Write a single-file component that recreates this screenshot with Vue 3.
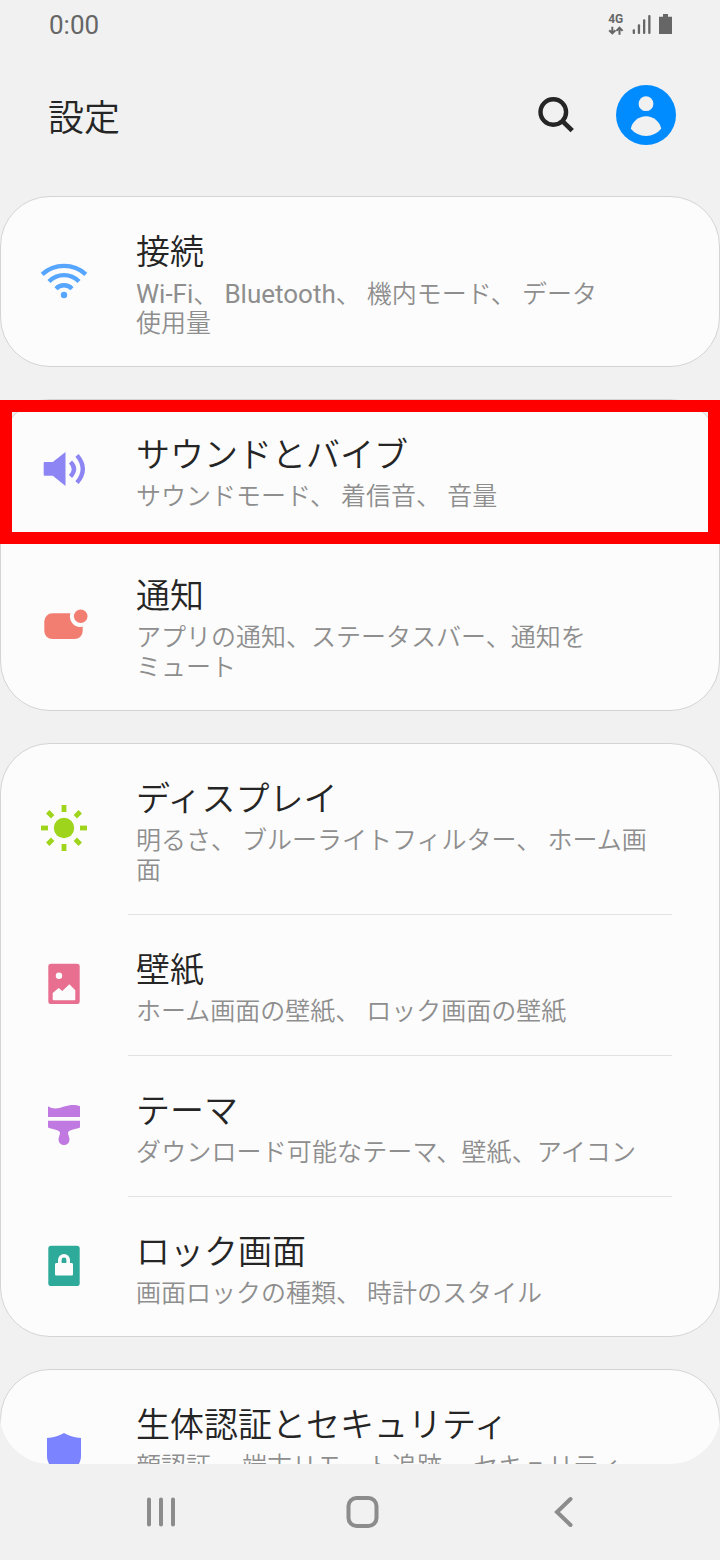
<script setup>
const groups = [
  [
    { icon: 'wifi', title: '接続', lines: ['Wi-Fi、 Bluetooth、 機内モード、 データ', '使用量'], tall: true },
  ],
  [
    { icon: 'sound', title: 'サウンドとバイブ', lines: ['サウンドモード、 着信音、 音量'], highlighted: true },
    { icon: 'notice', title: '通知', lines: ['アプリの通知、ステータスバー、通知を', 'ミュート'], tall: true },
  ],
  [
    { icon: 'display', title: 'ディスプレイ', lines: ['明るさ、 ブルーライトフィルター、 ホーム画', '面'], tall: true },
    { icon: 'wallpaper', title: '壁紙', lines: ['ホーム画面の壁紙、 ロック画面の壁紙'] },
    { icon: 'theme', title: 'テーマ', lines: ['ダウンロード可能なテーマ、壁紙、アイコン'] },
    { icon: 'lock', title: 'ロック画面', lines: ['画面ロックの種類、 時計のスタイル'] },
  ],
  [
    { icon: 'shield', title: '生体認証とセキュリティ', lines: ['顔認証、 端末リモート追跡、 セキュリティ'], tall: true },
  ],
]
const rays = [0, 45, 90, 135, 180, 225, 270, 315]

// Splits a line into Latin and Japanese runs so each can be set in its own size.
const runs = (line) =>
  line
    .split(/([A-Za-z-]+)/)
    .filter(Boolean)
    .map((text) => ({ text, latin: /^[A-Za-z-]+$/.test(text) }))
</script>

<template>
  <div class="phone">
    <main class="viewport">
      <div class="status">
        <span class="time">0:00</span>
        <svg class="status-icons" width="66" height="24" viewBox="0 0 66 24">
          <text x="0.2" y="11.4" class="net">4G</text>
          <g fill="none" stroke="#666" stroke-width="2">
            <path d="M4.3 14.7V21M1.2 18.2l3.1 3.2 3.1-3.2" />
            <path d="M11.5 22.8v-6.6M8.4 18.9l3.1-3.2 3.1 3.2" />
          </g>
          <g fill="#666">
            <rect x="24.7" y="17.3" width="2.3" height="4.7" rx="1" />
            <rect x="29.8" y="12.3" width="2.3" height="9.7" rx="1" />
            <rect x="35" y="7.3" width="2.3" height="14.7" rx="1" />
            <rect x="40.2" y="3" width="2.3" height="19" rx="1" />
            <path d="M55 2h5v2.7h4V22H51V4.7h4z" />
          </g>
        </svg>
      </div>

      <header class="header">
        <h1>設定</h1>
        <div class="actions">
          <svg width="40" height="40" viewBox="0 0 40 40" fill="none" stroke="#252525" stroke-width="4.4">
            <circle cx="17.3" cy="17" r="12.8" />
            <path d="M26.2 25.9l10 9.7" stroke-width="4.8" />
          </svg>
          <svg width="60" height="60" viewBox="0 0 60 60">
            <circle cx="30" cy="30" r="30" fill="#008cff" />
            <g fill="#f1f1f1">
              <circle cx="30" cy="18.7" r="7.4" />
              <path d="M14.8 43.7A15.5 15.5 0 0 1 45.2 43.7A19.5 19.5 0 0 1 14.8 43.7z" />
            </g>
          </svg>
        </div>
      </header>

      <section v-for="(group, gi) in groups" :key="gi" class="group">
        <div
          v-for="row in group"
          :key="row.title"
          class="row"
          :class="[row.icon, { tall: row.tall, highlighted: row.highlighted }]"
        >
          <svg class="icon" width="48" height="48" viewBox="0 0 48 48">
            <g v-if="row.icon === 'wifi'" fill="none" stroke="#56a5ff" stroke-width="4.3">
              <path d="M2.2 17.3A32.7 32.7 0 0 1 45.8 17.3" />
              <path d="M9 24.5A21 21 0 0 1 39 24.5" />
              <path d="M16 31.7A11 11 0 0 1 32 31.7" />
              <circle cx="24" cy="38" r="3.2" fill="#56a5ff" stroke="none" />
            </g>
            <g v-else-if="row.icon === 'sound'">
              <path d="M4.7 17H12.8L25.5 7V41L12.8 30.7H4.7a1 1 0 0 1-1-1V18a1 1 0 0 1 1-1z" fill="#8c85f3" />
              <path d="M30.5 17Q37.5 24 30.500 31.5M37 10.3Q48.600 24 37 37.7" fill="none" stroke="#8c85f3" stroke-width="4.3" />
            </g>
            <g v-else-if="row.icon === 'notice'">
              <rect x="4.3" y="12.3" width="38.4" height="25.7" rx="8" fill="#f27e72" />
              <circle cx="40.7" cy="15.3" r="10.8" fill="#fcfcfc" />
              <circle cx="40.7" cy="15.3" r="6.8" fill="#f27e72" />
            </g>
            <g v-else-if="row.icon === 'display'" fill="#9ed51c">
              <circle cx="24" cy="24" r="10.2" />
              <rect v-for="r in rays" :key="r" x="21.6" y="1" width="4.8" height="7" :transform="`rotate(${r} 24 24)`" />
            </g>
            <g v-else-if="row.icon === 'wallpaper'">
              <rect x="8.3" y="3.7" width="31.4" height="40.4" rx="2.8" fill="#e96f91" />
              <circle cx="19" cy="15.7" r="3.2" fill="#fcfcfc" />
              <path d="M12.7 33L18.7 28L22.3 31L29.3 24.3L35.3 30.3V39.3a1 1 0 0 1-1 1H13.7a1 1 0 0 1-1-1z" fill="#fcfcfc" />
            </g>
            <g v-else-if="row.icon === 'theme'" fill="#c079e0">
              <path d="M8 5.3C13 8.5 18 8 24 5.6C30 3.5 36 3.3 40 5.3V16H8z" />
              <path d="M8 19.7H40V26.5C35 28.3 28.5 29 28 31.5C28 34 29.5 36 29.5 38.5A5.5 5.5 0 0 1 18.5 38.5C18.5 36 20 34 20 31.5C19.5 29 13 28.3 8 26.5z" />
            </g>
            <g v-else-if="row.icon === 'lock'">
              <rect x="8.3" y="3.7" width="31.4" height="40.4" rx="2.8" fill="#2eaa9b" />
              <rect x="15" y="21" width="18" height="12.6" rx="1.4" fill="#fcfcfc" />
              <path d="M19.8 22V18a4.2 4.2 0 0 1 8.4 0V22" fill="none" stroke="#fcfcfc" stroke-width="3.6" />
            </g>
            <path v-else d="M24 3C29 6 35 7.7 41 8V26C41 36 32 42 24 45C16 42 7 36 7 26V8C13 7.7 19 6 24 3z" fill="#7b83ff" />
          </svg>
          <div class="text">
            <h2>{{ row.title }}</h2>
            <p v-for="line in row.lines" :key="line"><span v-for="(run, i) in runs(line)" :key="i" :class="{ latin: run.latin }">{{ run.text }}</span></p>
          </div>
        </div>
      </section>
    </main>

    <nav class="navbar">
      <svg width="48" height="48" viewBox="0 0 48 48" fill="none" stroke="#8c8c8c" stroke-width="4" stroke-linecap="round">
        <path d="M12 11.500V36.500M24 11.500V36.500M36 11.500V36.500" />
      </svg>
      <svg width="48" height="48" viewBox="0 0 48 48" fill="none" stroke="#8c8c8c" stroke-width="4">
        <rect x="9.5" y="10" width="28" height="28" rx="8" />
      </svg>
      <svg width="48" height="48" viewBox="0 0 48 48" fill="none" stroke="#8c8c8c" stroke-width="4" stroke-linecap="round">
        <path d="M30.500 11L17 24L30.500 37" />
      </svg>
    </nav>
  </div>
</template>

<style>
body {
  background: #f1f1f1;
}
</style>

<style scoped>
.phone {
  width: 720px;
  height: 1560px;
  overflow: hidden;
  background: #f1f1f1;
  font-family: Roboto, "Noto Sans CJK JP", sans-serif;
  color: #252525;
}
.viewport {
  height: 1464px;
  overflow: hidden;
  border-radius: 0 0 50px 50px;
}
.status {
  display: flex;
  justify-content: space-between;
  height: 48px;
  padding: 0 46px 0 49px;
}
.time {
  font-size: 26px;
  line-height: 50px;
  color: #666;
}
.status-icons {
  margin-top: 12px;
}
.net {
  font: 700 12px Roboto, sans-serif;
  fill: #666;
}
.header {
  display: flex;
  align-items: center;
  justify-content: space-between;
  height: 134px;
  margin-bottom: 14px;
  padding: 0 44px 0 48px;
}
.header h1 {
  margin: 8px 0 0;
  font-size: 36px;
  font-weight: 350;
  line-height: 54px;
}
.actions {
  display: flex;
  align-items: center;
  gap: 40px;
}
.group {
  box-sizing: border-box;
  margin-bottom: 32px;
  border: 1px solid #d4d4d4;
  border-radius: 50px;
  background: #fcfcfc;
}
.row {
  position: relative;
  display: flex;
  gap: 48px;
  height: 141px;
  padding-left: 39px;
}
.row.tall {
  height: 171px;
}
.row:last-child {
  height: 139px;
}
.row.tall:last-child {
  height: 169px;
}
.row:not(:last-child)::after {
  content: "";
  position: absolute;
  left: 127px;
  right: 47px;
  bottom: 0;
  height: 1px;
  background: #e2e2e2;
}
.icon {
  flex: none;
  margin-top: 45px;
}
.tall .icon {
  margin-top: 60px;
}
.highlighted::before {
  content: "";
  position: absolute;
  z-index: 2;
  top: 0;
  left: -1px;
  width: 720px;
  height: 144px;
  box-sizing: border-box;
  border: 12px solid #f00;
}
.text {
  padding-top: 30px;
  white-space: nowrap;
}
.text h2 {
  margin: 0 0 2px;
  font-size: 34px;
  font-weight: 350;
  line-height: 50px;
}
.text p {
  height: 30px;
  margin: 0;
  font-size: 25px;
  font-weight: 350;
  line-height: 30px;
  color: #8e8e8e;
}
.theme .text p {
  letter-spacing: 0.13px;
}
.latin {
  font-size: 26px;
  font-weight: 400;
}
.navbar {
  display: flex;
  align-items: center;
  justify-content: space-between;
  height: 96px;
  padding: 0 132px 0 137px;
}
</style>
